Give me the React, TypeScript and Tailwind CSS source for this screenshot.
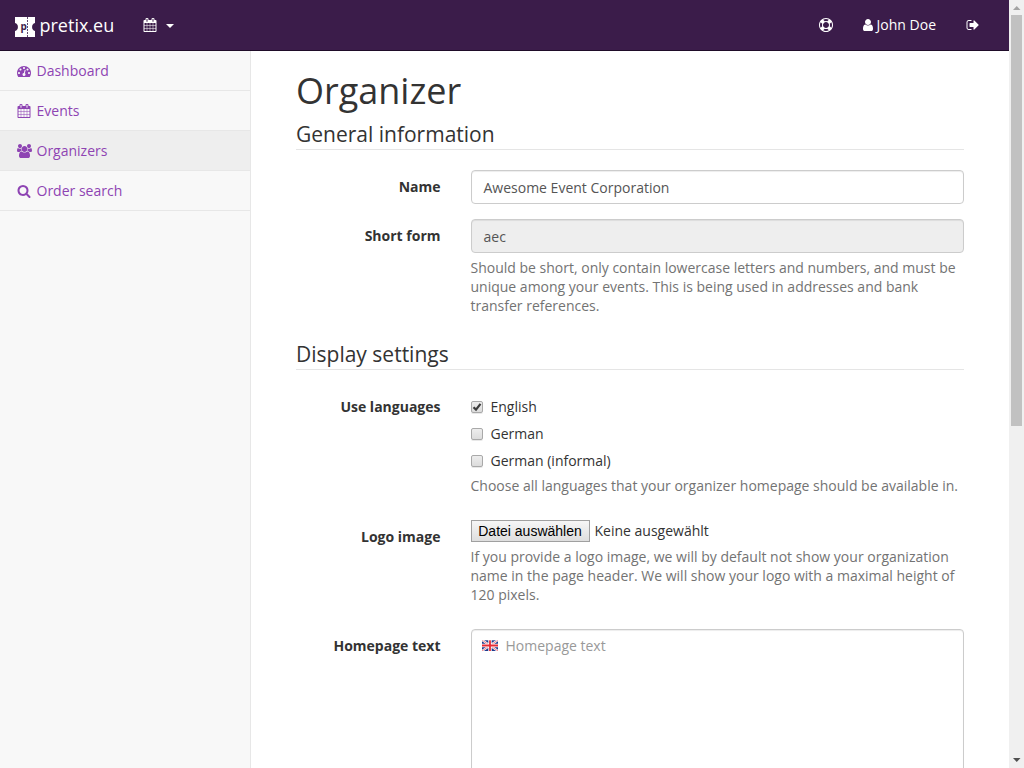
import type { ReactNode } from 'react';

const paths = {
  calendar:
    'M192 1664h288v-288h-288v288zm352 0h320v-288h-320v288zm-352-352h288v-320h-288v320zm352 0h320v-320h-320v320zm-352-384h288v-288h-288v288zm736 736h320v-288h-320v288zm-384-736h320v-288h-320v288zm768 736h288v-288h-288v288zm-384-352h320v-320h-320v320zm-352-864v-288q0-13-9.500-22.500t-22.500-9.500h-64q-13 0-22.500 9.500t-9.500 22.500v288q0 13 9.500 22.500t22.500 9.500h64q13 0 22.500-9.500t9.500-22.500zm736 864h288v-320h-288v320zm-384-384h320v-288h-320v288zm384 0h288v-288h-288v288zm32-480v-288q0-13-9.500-22.500t-22.500-9.500h-64q-13 0-22.500 9.500t-9.500 22.500v288q0 13 9.500 22.500t22.500 9.500h64q13 0 22.500-9.500t9.500-22.500zm384-64v1280q0 52-38 90t-90 38h-1408q-52 0-90-38t-38-90v-1280q0-52 38-90t90-38h128v-96q0-66 47-113t113-47h64q66 0 113 47t47 113v96h384v-96q0-66 47-113t113-47h64q66 0 113 47t47 113v96h128q52 0 90 38t38 90z',
  dashboard:
    'M384 1152q0-53-37.500-90.500t-90.500-37.500-90.500 37.500-37.500 90.500 37.500 90.500 90.500 37.500 90.500-37.500 37.500-90.500zm192-448q0-53-37.500-90.500t-90.500-37.500-90.500 37.500-37.500 90.500 37.500 90.500 90.500 37.500 90.500-37.500 37.500-90.500zm428 481l101-382q6-26-7.500-48.500t-38.500-29.500-48 6.500-30 39.500l-101 382q-60 5-107 43.500t-63 98.500q-20 77 20 146t117 89 146-20 89-117q16-60-6-117t-72-91zm660-33q0-53-37.500-90.500t-90.500-37.500-90.500 37.500-37.500 90.500 37.500 90.500 90.500 37.500 90.500-37.500 37.500-90.500zm-640-640q0-53-37.500-90.500t-90.500-37.500-90.500 37.500-37.500 90.500 37.500 90.500 90.500 37.500 90.500-37.500 37.500-90.500zm448 192q0-53-37.500-90.500t-90.500-37.500-90.500 37.500-37.500 90.500 37.500 90.500 90.500 37.500 90.500-37.500 37.500-90.500zm320 448q0 261-141 483-19 29-54 29h-1402q-35 0-54-29-141-221-141-483 0-182 71-348t191-286 286-191 348-71 348 71 286 191 191 286 71 348z',
  users:
    'M593 896q-162 5-265 128H194q-82 0-138-40.500T0 865q0-353 124-353 6 0 43.500 21t97.500 42.500T384 597q67 0 133-23-5 37-5 66 0 139 81 256zm1071 637q0 120-73 189.500t-194 69.500H523q-121 0-194-69.500T256 1533q0-53 3.500-103.500t14-109T300 1212t43-97.500 62-81 85.500-53.500T602 960q10 0 43 21.500t73 48 107 48 135 21.500 135-21.500 107-48 73-48 43-21.500q61 0 111.500 20t85.500 53.500 62 81 43 97.500 26.500 108.500 14 109 3.500 103.500zM640 256q0 106-75 181t-181 75-181-75-75-181 75-181T384 0t181 75 75 181zm704 384q0 159-112.500 271.500T960 1024 688.500 911.500 576 640t112.500-271.500T960 256t271.500 112.500T1344 640zm576 225q0 78-56 118.500t-138 40.500h-134q-103-123-265-128 81-117 81-256 0-29-5-66 66 23 133 23 59 0 119-21.500t97.500-42.500 43.500-21q124 0 124 353zm-128-609q0 106-75 181t-181 75-181-75-75-181 75-181 181-75 181 75 75 181z',
  search:
    'M1216 832q0-185-131.500-316.500t-316.500-131.500-316.500 131.500-131.500 316.500 131.500 316.500 316.500 131.500 316.500-131.500 131.500-316.500zm512 832q0 52-38 90t-90 38q-54 0-90-38l-343-342q-179 124-399 124-143 0-273.500-55.500t-225-150-150-225-55.500-273.500 55.500-273.500 150-225 225-150 273.500-55.500 273.500 55.500 225 150 150 225 55.500 273.500q0 220-124 399l343 343q37 37 37 90z',
  user: 'M1536 1399q0 109-62.500 187t-150.500 78h-854q-88 0-150.500-78t-62.500-187q0-85 8.500-160.500t31.500-152 58.500-131 94-89 134.500-34.500q131 128 313 128t313-128q76 0 134.500 34.500t94 89 58.500 131 31.500 152 8.500 160.500zm-256-887q0 159-112.500 271.500t-271.500 112.500-271.500-112.500-112.500-271.500 112.500-271.500 271.500-112.500 271.500 112.500 112.500 271.500z',
  signOut:
    'M704 1440q0 4 1 20t.5 26.500-3 23.500-10 19.500-20.500 6.500h-320q-119 0-203.500-84.500t-84.500-203.500v-704q0-119 84.500-203.500t203.500-84.500h320q13 0 22.500 9.500t9.500 22.500q0 4 1 20t.5 26.500-3 23.500-10 19.500-20.500 6.500h-320q-66 0-113 47t-47 113v704q0 66 47 113t113 47h312l11.500 1 11.500 3 8 5.500 7 9 2 13.500zm928-544q0 26-19 45l-544 544q-19 19-45 19t-45-19-19-45v-288h-448q-26 0-45-19t-19-45v-384q0-26 19-45t45-19h448v-288q0-26 19-45t45-19 45 19l544 544q19 19 19 45z',
  lifeRing:
    'M896 0q182 0 348 71t286 191 191 286 71 348-71 348-191 286-286 191-348 71-348-71-286-191-191-286-71-348 71-348 191-286 286-191 348-71zm0 128q-190 0-361 90l194 194q82-28 167-28t167 28l194-194q-171-90-361-90zm-678 1129l194-194q-28-82-28-167t28-167l-194-194q-90 171-90 361t90 361zm678 407q190 0 361-90l-194-194q-82 28-167 28t-167-28l-194 194q171 90 361 90zm0-384q159 0 271.500-112.500t112.500-271.500-112.500-271.500-271.500-112.500-271.500 112.500-112.500 271.500 112.500 271.500 271.500 112.500zm484-217l194 194q90-171 90-361t-90-361l-194 194q28 82 28 167t-28 167z',
};

type IconName = keyof typeof paths;

function Icon({ name, className = '' }: { name: IconName; className?: string }) {
  const wide = name === 'users';
  return (
    <svg
      viewBox={wide ? '0 0 1920 1792' : '0 0 1792 1792'}
      className={`shrink-0 fill-current ${wide ? 'h-[14px] w-[15px]' : 'size-[14px]'} ${className}`}
    >
      <path d={paths[name]} />
    </svg>
  );
}

function Logo() {
  return (
    <svg viewBox="0 0 20 20" className="size-5 shrink-0">
      <path
        fill="#fff"
        d="M0 0h20v6a4.200 4.200 0 0 0 0 8V20H0v-6a4.200 4.200 0 0 0 0-8z"
      />
      <path d="M12.500 0v20" stroke="#3b1c4a" strokeOpacity=".8" strokeWidth="1" strokeDasharray="2 1" />
      <text x="5.400" y="13" fill="#3b1c4a" className="font-['Open_Sans',sans-serif] text-[10px] font-bold">
        p
      </text>
    </svg>
  );
}

function Flag() {
  return (
    <svg viewBox="0 0 16 11" className="h-[11px] w-4 shrink-0">
      <path fill="#1f3a8c" d="M0 0h16v11H0z" />
      <path d="M0 0l16 11M16 0L0 11" stroke="#fff" strokeWidth="2.200" />
      <path d="M0 0l16 11M16 0L0 11" stroke="#e8606a" strokeWidth=".8" />
      <path d="M8 0v11M0 5.500h16" stroke="#fff" strokeWidth="3.400" />
      <path d="M8 0v11M0 5.500h16" stroke="#e62c36" strokeWidth="1.800" />
      <path d="M0 .5h16" stroke="#fff" strokeOpacity=".3" />
    </svg>
  );
}

const nav: { icon: IconName; label: string; active?: boolean }[] = [
  { icon: 'dashboard', label: 'Dashboard' },
  { icon: 'calendar', label: 'Events' },
  { icon: 'users', label: 'Organizers', active: true },
  { icon: 'search', label: 'Order search' },
];

function Row({ label, className = '', children }: { label: string; className?: string; children: ReactNode }) {
  return (
    <div className={`flex ${className}`}>
      <div className="w-[144.5px] shrink-0 pt-[7px] text-right font-bold">{label}</div>
      <div className="ml-[30px] min-w-0 flex-1">{children}</div>
    </div>
  );
}

function Legend({ children }: { children: ReactNode }) {
  return (
    <h2 className="h-[30px] border-b border-[#e5e5e5] text-[21px] leading-[29px] text-[#333]">{children}</h2>
  );
}

function Check({ label, checked = false }: { label: string; checked?: boolean }) {
  return (
    <div className="flex h-[27px] items-center">
      <span className="flex h-3 w-3 shrink-0 items-center justify-center rounded-[2px] border border-[#a9a9a9] bg-linear-to-b from-[#ededed] to-[#dcdcdc] shadow-[0_1px_0_#e8e8e8]">
        {checked && (
          <svg viewBox="0 0 10 10" className="size-[10px] shrink-0">
            <path d="M1.500 5.200L4 7.600L8.500 1.800" fill="none" stroke="#3c3c3c" strokeWidth="2.200" />
          </svg>
        )}
      </span>
      <span className="ml-2">{label}</span>
    </div>
  );
}

const field =
  'flex h-[34px] items-center rounded-[4px] border border-[#ccc] px-3 pt-px text-[#555] shadow-[inset_0_1px_1px_rgba(0,0,0,0.075)]';

export default function App() {
  return (
    <div className="flex h-screen w-full overflow-hidden bg-white font-['Open_Sans',sans-serif] text-[14px] leading-[19px] text-[#333]">
      <div className="flex min-w-0 flex-1 flex-col">
        <header className="flex h-[51px] shrink-0 items-center border-b border-[#1f0c29] bg-[#3b1c4a] text-white">
          <div className="flex items-center pl-[15px]">
            <div className="pt-1">
              <Logo />
            </div>
            <span className="ml-[4.500px] text-[18px] leading-[20px]">pretix.eu</span>
          </div>
          <div className="ml-[29px] flex items-center">
            <Icon name="calendar" />
            <span className="mt-[2px] ml-[8.500px] h-0 w-0 border-x-4 border-t-4 border-x-transparent border-t-white" />
          </div>
          <div className="ml-auto flex items-center pr-[29.500px]">
            <Icon name="lifeRing" />
            <Icon name="user" className="mr-[2px] ml-[28px]" />
            <span className="pb-px leading-[18px]">John Doe</span>
            <Icon name="signOut" className="ml-[29.500px]" />
          </div>
        </header>
        <div className="flex min-h-0 flex-1">
          <aside className="w-[251px] shrink-0 border-r border-[#e7e7e7] bg-[#f8f8f8] text-[#8e44b3]">
            {nav.map((item) => (
              <div
                key={item.label}
                className={`flex h-10 items-center border-b border-[#e7e7e7] pl-[15px] ${item.active ? 'bg-[#eee]' : ''}`}
              >
                <span className="mt-px flex w-[18px] justify-center">
                  <Icon name={item.icon} />
                </span>
                <span className="ml-[3.500px]">{item.label}</span>
              </div>
            ))}
          </aside>
          <main className="min-w-0 flex-1 overflow-hidden pr-[45px] pl-[45px]">
            <h1 className="mt-[20px] text-[36px] leading-[40px]">Organizer</h1>
            <div className="mt-[9px]">
              <Legend>General information</Legend>
            </div>
            <Row label="Name" className="mt-5">
              <div className={`${field} bg-white`}>Awesome Event Corporation</div>
            </Row>
            <Row label="Short form" className="mt-[15px]">
              <div className={`${field} bg-[#eee]`}>aec</div>
              <p className="mt-[5px] text-[#737373]">
                Should be short, only contain lowercase letters and numbers, and must be unique among your events.
                This is being used in addresses and bank transfer references.
              </p>
            </Row>
            <div className="mt-[25px]">
              <Legend>Display settings</Legend>
            </div>
            <Row label="Use languages" className="mt-5">
              <div className="pt-[3px]">
                <Check label="English" checked />
                <Check label="German" />
                <Check label="German (informal)" />
              </div>
              <p className="mt-[2px] text-[#737373]">
                Choose all languages that your organizer homepage should be available in.
              </p>
            </Row>
            <Row label="Logo image" className="mt-[25px]">
              <div className="flex items-start">
                <span className="flex h-[22px] w-[119px] items-center justify-center border border-[#a0a0a0] bg-linear-to-b from-[#f6f6f6] to-[#dedede] font-['Liberation_Sans',sans-serif] text-[14px] text-black">
                  Datei auswählen
                </span>
                <span className="ml-[5px] pt-px">Keine ausgewählt</span>
              </div>
              <p className="mt-[5px] text-[#737373]">
                If you provide a logo image, we will by default not show your organization name in the page header. We
                will show your logo with a maximal height of 120 pixels.
              </p>
            </Row>
            <Row label="Homepage text" className="mt-[25px]">
              <div className="flex h-[200px] items-start rounded-[4px] border border-[#ccc] pt-[6px] pl-[10px] text-[#999] shadow-[inset_0_1px_1px_rgba(0,0,0,0.075)]">
                <div className="pt-[4px]">
                  <Flag />
                </div>
                <span className="ml-2">Homepage text</span>
              </div>
            </Row>
          </main>
        </div>
      </div>
      <div className="flex w-[15px] shrink-0 flex-col items-center bg-[#f0f0f0]">
        <svg viewBox="0 0 15 15" className="size-[15px] shrink-0">
          <path d="M4 10h7.500L7.750 6z" fill="#a3a3a3" />
        </svg>
        <div className="h-[411px] w-[11px] bg-[#c1c1c1]" />
        <svg viewBox="0 0 15 15" className="mt-auto size-[15px] shrink-0">
          <path d="M4 5h7.500L7.750 9z" fill="#505050" />
        </svg>
      </div>
    </div>
  );
}
